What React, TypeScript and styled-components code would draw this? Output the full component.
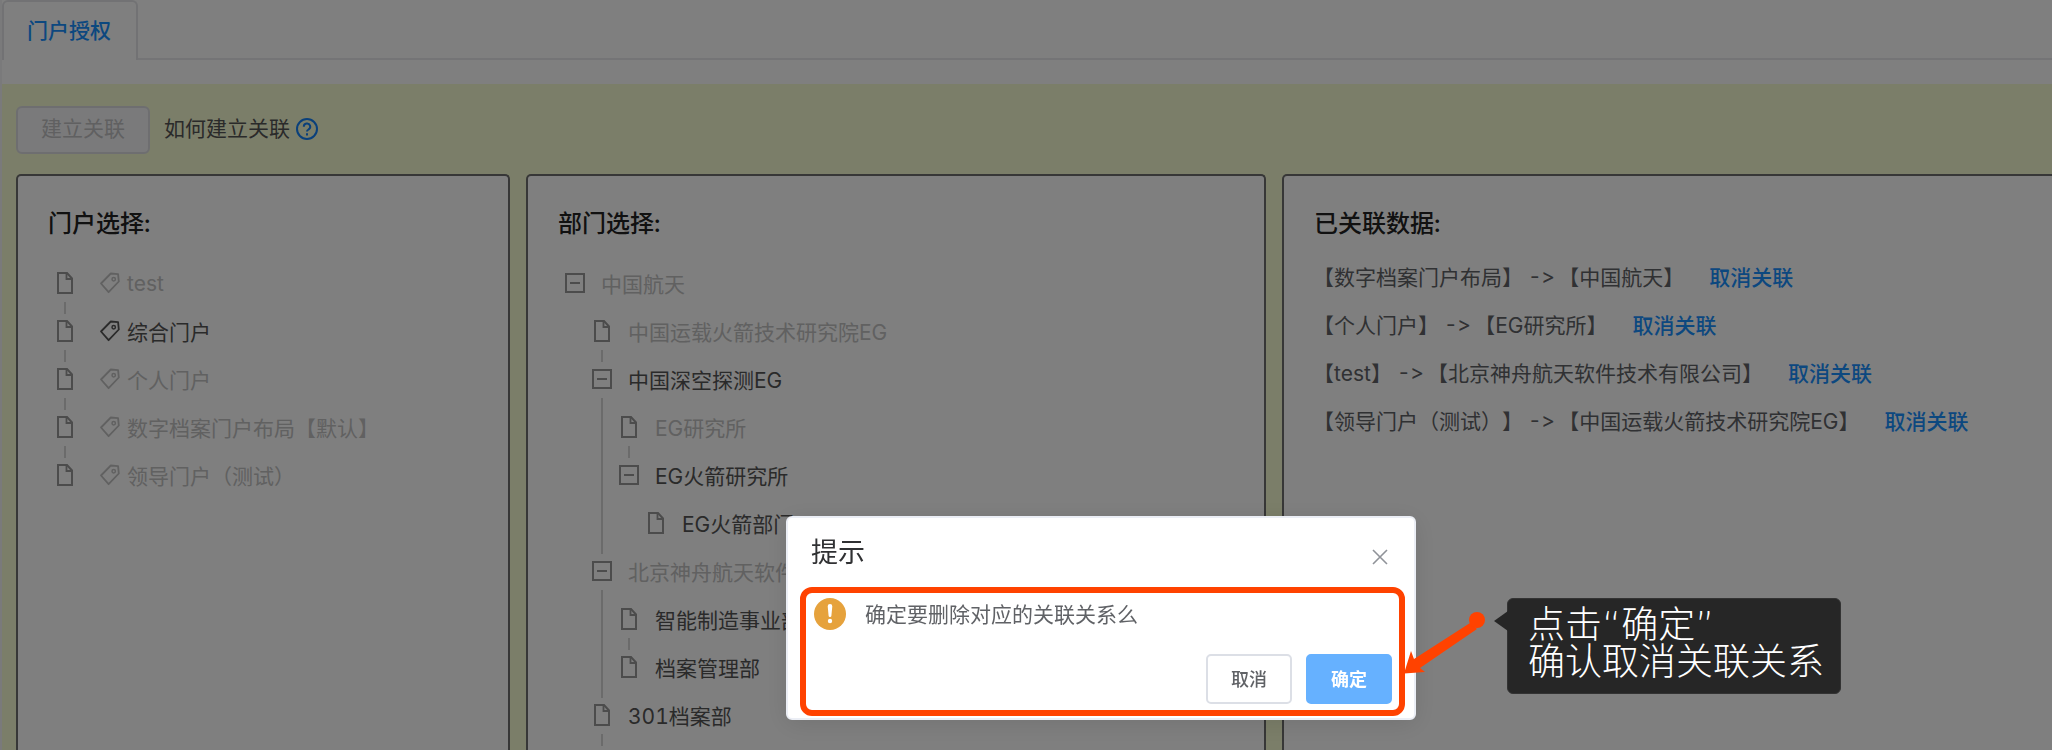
import React from 'react';
import styled, { createGlobalStyle } from 'styled-components';

const GlobalStyle = createGlobalStyle`
  * { box-sizing: border-box; }
  html, body { margin: 0; padding: 0; overflow: hidden; }
  body, button {
    font-family: Inter, "Noto Sans CJK SC", sans-serif;
    font-size: 21px;
    font-variant-ligatures: none;
    font-variant-numeric: tabular-nums;
    text-spacing-trim: space-all;
  }
  ul, h2, p { margin: 0; padding: 0; list-style: none; }
`;

const Page = styled.div`
  display: flex;
  flex-direction: column;
  height: 100vh;
  overflow: hidden;
  background: #fff;
  color: #606266;
  border-left: 2px solid #f4f4f6;
`;

const TabBar = styled.nav`
  display: flex;
  flex: none;
  height: 60px;
  margin-bottom: 24px;
`;

const TabRest = styled.div`
  flex: 1;
  border-bottom: 2px solid #e8e9ec;
`;

const Tab = styled.button`
  padding: 0 25px 4px 23px;
  border: 2px solid #e4e5e8;
  border-bottom: 0;
  border-radius: 6px 6px 0 0;
  background: #fff;
  color: #1890ff;
  font-weight: 500;
`;

const Content = styled.main`
  display: flex;
  flex: 1;
  flex-direction: column;
  gap: 20px;
  min-height: 0;
  padding: 22px 0 0 14px;
  background: #f7fcd2;
`;

const Toolbar = styled.div`
  display: flex;
  align-items: center;
  gap: 14px;
`;

const RelateButton = styled.button`
  width: 134px;
  height: 48px;
  padding: 0 0 6px;
  border: 2px solid #dcdde1;
  border-radius: 6px;
  background: #f5f5f6;
  color: #c0c0c2;
`;

const HelpText = styled.span`
  display: flex;
  align-items: center;
  gap: 5px;
  padding-bottom: 6px;
  color: #555;
  svg { margin-top: 4px; }
`;

const Columns = styled.div`
  display: grid;
  flex: 1;
  grid-template-columns: 494fr 740fr 786fr;
  gap: 16px;
  min-height: 0;
  margin-right: -16px;
`;

const Panel = styled.section`
  padding: 30px 29px;
  overflow: hidden;
  border: 2px solid #6e6e6e;
  border-bottom: 0;
  border-radius: 5px 5px 0 0;
  background: #fff;
`;

const PanelTitle = styled.h2`
  padding-left: 1px;
  color: #222;
  font-size: 24px;
  font-weight: 500;
  line-height: 36px;
`;

const Tree = styled.ul`
  padding: 24px 0 0 4px;
`;

const TreeRow = styled.li`
  display: flex;
  height: 48px;
`;

const Indent = styled.span<{ $line: boolean }>`
  flex: none;
  width: 27px;
  &::before {
    content: '';
    display: block;
    width: 2px;
    height: 100%;
    margin-left: 13px;
    background: ${(p) => (p.$line ? '#d6d6d6' : 'transparent')};
  }
`;

const Switcher = styled.span<{ $line: boolean }>`
  flex: none;
  width: 27px;
  svg {
    display: block;
    margin: 5px 0 0 1px;
  }
  &::after {
    content: '';
    display: block;
    width: 2px;
    height: 12px;
    margin: 7px 0 0 13px;
    background: ${(p) => (p.$line ? '#d6d6d6' : 'transparent')};
  }
`;

const NodeLabel = styled.span<{ $disabled?: boolean }>`
  display: flex;
  align-items: center;
  gap: 7px;
  height: 34px;
  padding-left: 13px;
  color: ${(p) => (p.$disabled ? '#c2c2c2' : '#555')};
  white-space: nowrap;
  svg { margin-left: 8px; }
`;

const RelationList = styled.ul`
  padding-top: 10px;
`;

const Relation = styled.li`
  display: flex;
  align-items: center;
  height: 48px;
  white-space: nowrap;
`;

const Arrow = styled.span`
  margin: 0 3px 0 5px;
`;

const CancelLink = styled.a`
  margin-left: 25px;
  color: #1890ff;
  font-weight: 500;
  text-decoration: none;
`;

const Overlay = styled.div`
  position: fixed;
  inset: 0;
  display: flex;
  align-items: center;
  justify-content: center;
  padding: 486px 0 0 150px;
  background: rgba(0, 0, 0, 0.5);
`;

const Dialog = styled.div`
  position: relative;
  width: 630px;
  border: 2px solid #ebeef5;
  border-radius: 6px;
  background: #fff;
  box-shadow: 0 4px 24px rgba(0, 0, 0, 0.1);
`;

const DialogHeader = styled.div`
  display: flex;
  align-items: center;
  justify-content: space-between;
  height: 69px;
  padding: 0 26px 0 23px;
`;

const DialogTitle = styled.h2`
  color: #303133;
  font-size: 27px;
  font-weight: 400;
  line-height: 40px;
`;

const CloseButton = styled.button`
  display: flex;
  padding: 8px 0 0;
  border: 0;
  background: none;
`;

const Highlight = styled.div`
  margin: 0 9px 2px 12px;
  padding: 5px 7px 6px 8px;
  border: 6px solid #ff4200;
  border-radius: 12px;
`;

const Message = styled.p`
  display: flex;
  align-items: center;
  gap: 19px;
  height: 32px;
  color: #606266;
`;

const MessageText = styled.span`
  padding-bottom: 2px;
`;

const Actions = styled.div`
  display: flex;
  justify-content: flex-end;
  gap: 14px;
  padding-top: 24px;
`;

const ActionButton = styled.button<{ $primary?: boolean }>`
  width: 86px;
  height: 50px;
  padding: 0 0 2px;
  border: 2px solid ${(p) => (p.$primary ? '#66b1ff' : '#dcdfe6')};
  border-radius: 5px;
  background: ${(p) => (p.$primary ? '#66b1ff' : '#fff')};
  color: ${(p) => (p.$primary ? '#fff' : '#606266')};
  font-size: 18px;
  font-weight: ${(p) => (p.$primary ? 700 : 500)};
`;

const Pointer = styled.svg`
  position: absolute;
  top: 92px;
  left: 616px;
`;

const Callout = styled.div`
  position: absolute;
  top: 80px;
  left: 719px;
  padding: 8px 16px 12px 20px;
  border: 1px solid #333;
  border-radius: 6px;
  background: #262626;
  color: #fff;
  font-family: "DejaVu Sans", "Noto Sans CJK SC", sans-serif;
  font-size: 37px;
  font-weight: 300;
  line-height: 37px;
  white-space: nowrap;
  &::before {
    content: '';
    position: absolute;
    top: 12px;
    left: -14px;
    border: solid transparent;
    border-width: 10px 14px 10px 0;
    border-right-color: #262626;
  }
`;

const FileIcon = () => (
  <svg width="26" height="24" viewBox="0 0 26 24" fill="none" stroke="#989898" strokeWidth="2">
    <path d="M6 2h9l5 5.500V22H6z" />
    <path d="M14.500 2.500V8H20" strokeWidth="1.800" />
  </svg>
);

const MinusIcon = () => (
  <svg width="26" height="24" viewBox="0 0 26 24" fill="none" stroke="#989898" strokeWidth="2">
    <path d="M4 3h18v18H4zM8 12h10" />
  </svg>
);

const TagIcon = () => (
  <svg width="21" height="22" viewBox="0 0 21 22" fill="none" stroke="currentColor" strokeWidth="1.800">
    <path d="M2 11.500 11.800 1.500l7.300.6.700 7.400L9.600 20.200z" strokeLinejoin="round" />
    <circle cx="14.700" cy="7.200" r="1.700" strokeWidth="1.500" />
  </svg>
);

const HelpIcon = () => (
  <svg width="24" height="24" viewBox="0 0 24 24" fill="none" stroke="#1480f6" strokeWidth="2">
    <circle cx="12" cy="12" r="10" />
    <path d="M8.800 9.700a3.200 3.200 0 1 1 4.700 2.800c-1 .6-1.500 1-1.500 2.100" />
    <path d="M12 16.200v2.200" />
  </svg>
);

const WarningIcon = () => (
  <svg width="32" height="32" viewBox="0 0 32 32">
    <circle cx="16" cy="16" r="16" fill="#e6a23c" />
    <path d="M13.700 8.300a2.300 2.300 0 0 1 4.600 0l-.9 9.400a1.400 1.400 0 0 1-2.800 0z" fill="#fff" />
    <circle cx="16" cy="23" r="2.200" fill="#fff" />
  </svg>
);

const CloseIcon = () => (
  <svg width="16" height="16" viewBox="0 0 16 16" stroke="#909399" strokeWidth="1.600">
    <path d="m1 1 14 14M15 1 1 15" />
  </svg>
);

type Node = { text: string; disabled?: boolean; open?: boolean; guides?: boolean[]; next?: boolean };

const portals: Node[] = [
  { text: 'test', disabled: true, next: true },
  { text: '综合门户', next: true },
  { text: '个人门户', disabled: true, next: true },
  { text: '数字档案门户布局【默认】', disabled: true, next: true },
  { text: '领导门户（测试）', disabled: true },
];

const departments: Node[] = [
  { text: '中国航天', disabled: true, open: true },
  { text: '中国运载火箭技术研究院EG', disabled: true, guides: [false], next: true },
  { text: '中国深空探测EG', open: true, guides: [false], next: true },
  { text: 'EG研究所', disabled: true, guides: [false, true], next: true },
  { text: 'EG火箭研究所', open: true, guides: [false, true] },
  { text: 'EG火箭部门', guides: [false, true, false] },
  { text: '北京神舟航天软件技术有限公司', disabled: true, open: true, guides: [false], next: true },
  { text: '智能制造事业部', guides: [false, true], next: true },
  { text: '档案管理部', guides: [false, true] },
  { text: '301档案部', guides: [false], next: true },
];

const relations = [
  ['数字档案门户布局', '中国航天'],
  ['个人门户', 'EG研究所'],
  ['test', '北京神舟航天软件技术有限公司'],
  ['领导门户（测试）', '中国运载火箭技术研究院EG'],
];

const NodeTree = ({ nodes, tagged }: { nodes: Node[]; tagged?: boolean }) => (
  <Tree>
    {nodes.map((n) => (
      <TreeRow key={n.text}>
        {(n.guides || []).map((line, i) => (
          <Indent key={i} $line={line} />
        ))}
        <Switcher $line={!!n.next}>{n.open ? <MinusIcon /> : <FileIcon />}</Switcher>
        <NodeLabel $disabled={n.disabled}>
          {tagged && <TagIcon />}
          {n.text}
        </NodeLabel>
      </TreeRow>
    ))}
  </Tree>
);

export default function App() {
  return (
    <>
      <GlobalStyle />
      <Page>
        <TabBar>
          <Tab type="button">门户授权</Tab>
          <TabRest />
        </TabBar>
        <Content>
          <Toolbar>
            <RelateButton type="button" disabled>建立关联</RelateButton>
            <HelpText>
              如何建立关联
              <HelpIcon />
            </HelpText>
          </Toolbar>
          <Columns>
            <Panel>
              <PanelTitle>门户选择:</PanelTitle>
              <NodeTree nodes={portals} tagged />
            </Panel>
            <Panel>
              <PanelTitle>部门选择:</PanelTitle>
              <NodeTree nodes={departments} />
            </Panel>
            <Panel>
              <PanelTitle>已关联数据:</PanelTitle>
              <RelationList>
                {relations.map(([from, to]) => (
                  <Relation key={from}>
                    <span>【{from}】</span>
                    <Arrow>-&gt;</Arrow>
                    <span>【{to}】</span>
                    <CancelLink href="#">取消关联</CancelLink>
                  </Relation>
                ))}
              </RelationList>
            </Panel>
          </Columns>
        </Content>
      </Page>
      <Overlay>
        <Dialog role="dialog" aria-labelledby="dialog-title">
          <DialogHeader>
            <DialogTitle id="dialog-title">提示</DialogTitle>
            <CloseButton type="button" aria-label="关闭">
              <CloseIcon />
            </CloseButton>
          </DialogHeader>
          <Highlight>
            <Message>
              <WarningIcon />
              <MessageText>确定要删除对应的关联关系么</MessageText>
            </Message>
            <Actions>
              <ActionButton type="button">取消</ActionButton>
              <ActionButton type="button" $primary>确定</ActionButton>
            </Actions>
          </Highlight>
          <Pointer width="82" height="66" viewBox="0 0 82 66" fill="#ff4200">
            <path d="M0 63.500 7 41l3 8 56-36 7 6-57 39 5 4z" />
            <circle cx="73" cy="10" r="8" />
          </Pointer>
          <Callout>
            点击“确定”
            <br />
            确认取消关联关系
          </Callout>
        </Dialog>
      </Overlay>
    </>
  );
}
